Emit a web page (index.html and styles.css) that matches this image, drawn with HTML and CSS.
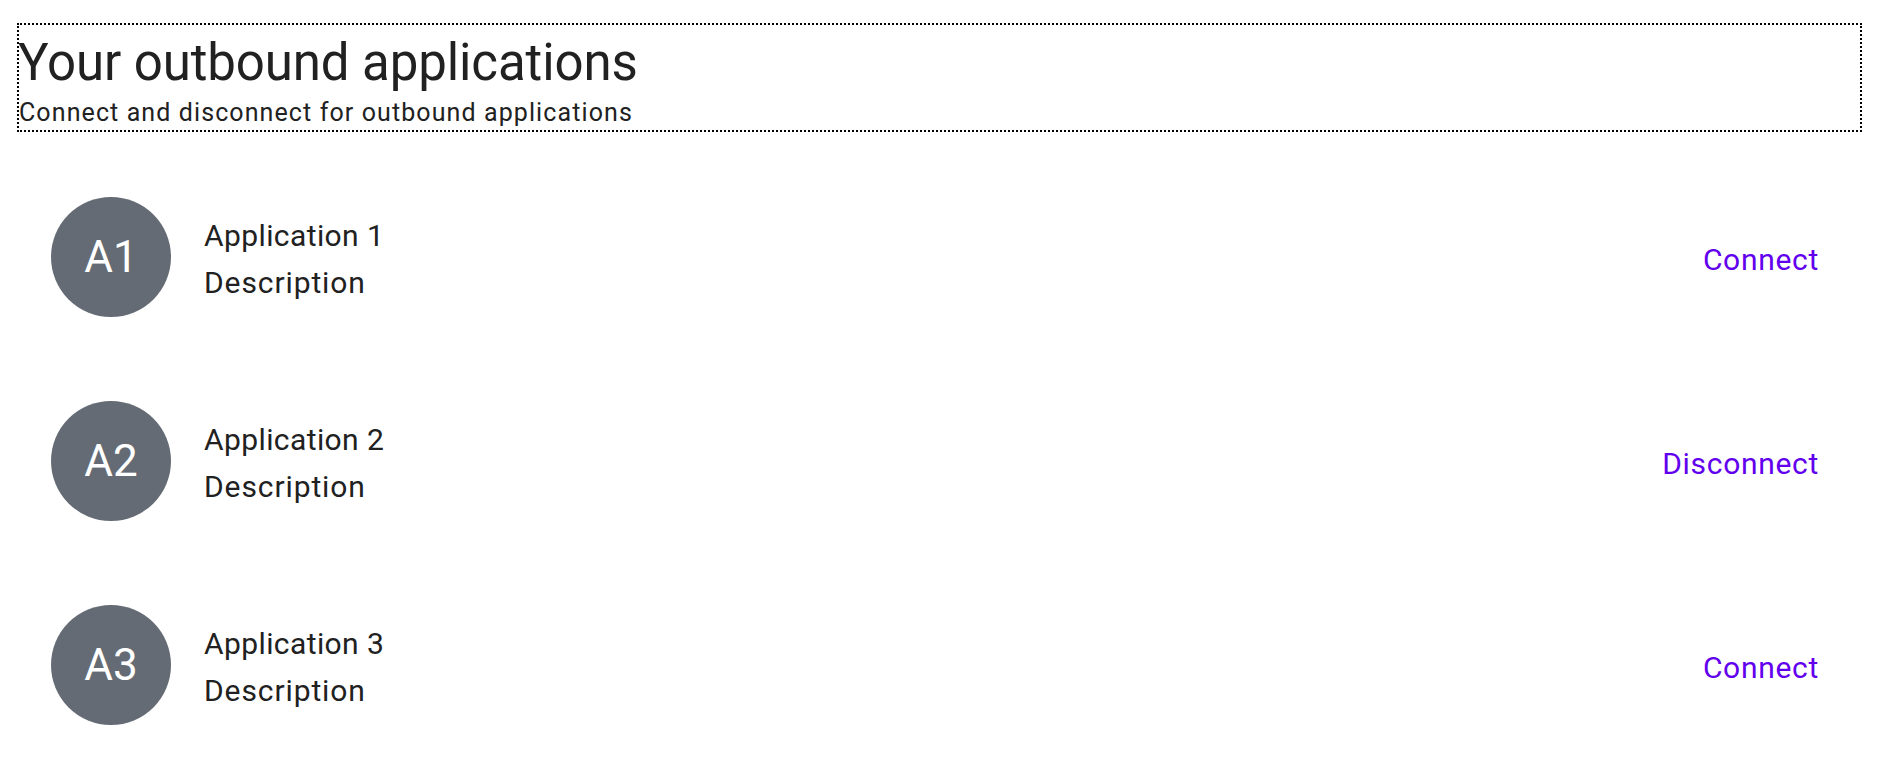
FILE: index.html
```html
<!DOCTYPE html>
<html lang="en">
<head>
<meta charset="utf-8">
<title>Your outbound applications</title>
<link rel="stylesheet" href="styles.css">
</head>
<body>
<main class="page">
  <header class="intro">
    <h1 class="intro-title">Your outbound applications</h1>
    <p class="intro-sub">Connect and disconnect for outbound applications</p>
  </header>
  <ul class="app-list">
    <li class="app-row">
      <div class="avatar">A1</div>
      <div class="app-text">
        <div class="app-name">Application 1</div>
        <div class="app-desc">Description</div>
      </div>
      <button class="app-action" type="button">Connect</button>
    </li>
    <li class="app-row">
      <div class="avatar">A2</div>
      <div class="app-text">
        <div class="app-name">Application 2</div>
        <div class="app-desc">Description</div>
      </div>
      <button class="app-action" type="button">Disconnect</button>
    </li>
    <li class="app-row">
      <div class="avatar">A3</div>
      <div class="app-text">
        <div class="app-name">Application 3</div>
        <div class="app-desc">Description</div>
      </div>
      <button class="app-action" type="button">Connect</button>
    </li>
  </ul>
</main>
</body>
</html>
```

FILE: styles.css
```css
html, body {
  margin: 0;
  padding: 0;
  background: #ffffff;
}

body {
  font-family: Roboto, "Liberation Sans", Arial, sans-serif;
  color: #212121;
}

.page {
  padding: 23px 20px 0 17px;
}

.intro {
  border: 2px dotted #000000;
  padding: 0 0 5px 0;
}

.intro-title {
  margin: 0 0 0 -1px;
  font-size: 51px;
  font-weight: 400;
  line-height: 75px;
  letter-spacing: -0.1px;
}

.intro-sub {
  margin: 0;
  font-size: 25px;
  line-height: 25px;
  letter-spacing: 1.1px;
}

.app-list {
  list-style: none;
  margin: 23px 0 0 0;
  padding: 0;
}

.app-row {
  display: flex;
  align-items: center;
  padding: 42px 43px 42px 34px;
}

.avatar {
  flex: none;
  width: 120px;
  height: 120px;
  border-radius: 50%;
  background: #646b74;
  color: #ffffff;
  display: flex;
  align-items: center;
  justify-content: center;
  font-size: 44px;
  line-height: 1;
}

.app-text {
  flex: 1;
  margin-left: 33px;
  padding-top: 4px;
  font-size: 30px;
  line-height: 47px;
  letter-spacing: 0.4px;
}

.app-desc {
  letter-spacing: 0.9px;
}

.app-action {
  flex: none;
  margin: 5px 0 0 0;
  padding: 0;
  border: 0;
  background: none;
  font-family: Roboto, "Liberation Sans", Arial, sans-serif;
  font-size: 30px;
  font-weight: 400;
  line-height: 35px;
  letter-spacing: 0.7px;
  color: #6200ee;
  cursor: pointer;
}
```
